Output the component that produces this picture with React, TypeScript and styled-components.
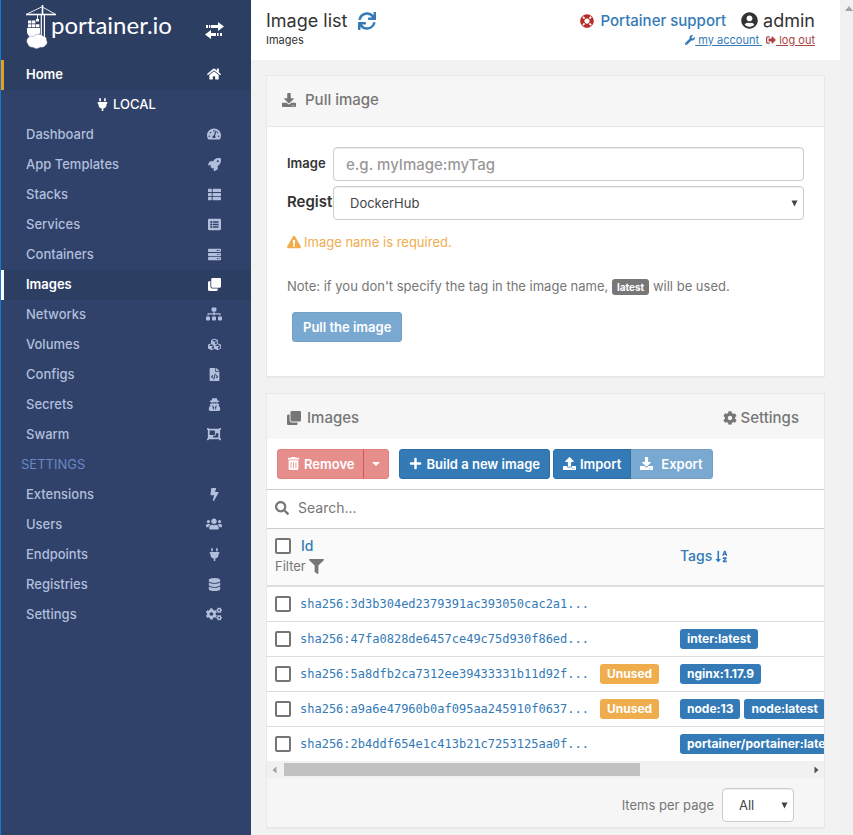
import React from "react";
import styled, { createGlobalStyle, css } from "styled-components";
import type { IconType } from "react-icons";
import {
  FaBolt,
  FaClone,
  FaCog,
  FaCogs,
  FaCubes,
  FaDatabase,
  FaDownload,
  FaExclamationTriangle,
  FaFileCode,
  FaFilter,
  FaHome,
  FaLifeRing,
  FaListAlt,
  FaObjectGroup,
  FaPlug,
  FaPlus,
  FaRocket,
  FaSearch,
  FaServer,
  FaSignOutAlt,
  FaSitemap,
  FaSortAlphaDown,
  FaSync,
  FaTachometerAlt,
  FaThList,
  FaTrashAlt,
  FaUpload,
  FaUserCircle,
  FaUserSecret,
  FaUsers,
  FaWrench,
} from "react-icons/fa";

const GlobalStyle = createGlobalStyle`
  *, *::before, *::after { box-sizing: border-box; }
  body {
    margin: 0;
    background: #f2f2f2;
    color: #333;
    font-family: Inter, "Open Sans", sans-serif;
    font-size: 14px;
    line-height: 20px;
  }
  button, input, select { font: inherit; margin: 0; }
  a { text-decoration: none; }
`;

const Page = styled.div`
  display: flex;
  min-height: 100vh;
  border-left: 1px solid #147bd1;
`;

/* ---------- Sidebar ---------- */

const Sidebar = styled.aside`
  flex: 0 0 250px;
  background: #30426a;
`;

const SidebarHeader = styled.div`
  display: flex;
  justify-content: space-between;
  height: 60px;
  padding: 5px 27px 0 24px;
  background: #2d3e63;
  color: #fff;
`;

const Brand = styled.a`
  display: flex;
  color: #fff;
`;

const BrandName = styled.span`
  margin-left: -6px;
  font-family: Lato, sans-serif;
  font-size: 24px;
  line-height: 40px;
`;

const ToggleButton = styled.button`
  align-self: flex-start;
  margin-top: 17px;
  padding: 0;
  border: 0;
  background: none;
  color: inherit;
  line-height: 0;
`;

const NavList = styled.ul`
  margin: 0;
  padding: 0;
  list-style: none;
`;

type NavTone = "home" | "current" | "plain";

const NavLink = styled.a<{ $tone: NavTone }>`
  display: flex;
  align-items: center;
  justify-content: space-between;
  height: 30px;
  padding: 0 27px 2px 22px;
  border-left: 3px solid
    ${({ $tone }) =>
      $tone === "home" ? "#e99d1a" : $tone === "current" ? "#fff" : "transparent"};
  background: ${({ $tone }) => ($tone === "plain" ? "transparent" : "#2d3e63")};
  color: ${({ $tone }) => ($tone === "plain" ? "#b2bfdc" : "#fff")};
  font-size: 13px;
  font-weight: ${({ $tone }) => ($tone === "plain" ? 500 : 600)};
`;

const NavIcon = styled.span`
  display: flex;
  justify-content: center;
  width: 20px;
`;

const EndpointName = styled.li`
  display: flex;
  align-items: center;
  justify-content: center;
  gap: 4px;
  height: 30px;
  padding-bottom: 2px;
  color: #fff;
  font-size: 13px;
  font-weight: 500;
`;

const NavTitle = styled.li`
  height: 30px;
  padding-left: 20px;
  color: #6b86c4;
  font-size: 13px;
  line-height: 28px;
`;

/* ---------- Main area ---------- */

const Main = styled.main`
  flex: 1;
  min-width: 0;
`;

const TopBar = styled.header`
  display: flex;
  justify-content: space-between;
  height: 60px;
  padding: 10px 25px 0 15px;
  background: #fff;
`;

const TitleRow = styled.div`
  display: flex;
  align-items: center;
  gap: 11px;
  height: 21px;
`;

const Title = styled.h1`
  margin: 0;
  font-size: 18px;
  font-weight: 400;
`;

const IconButton = styled.button`
  display: flex;
  padding: 0;
  border: 0;
  background: none;
  color: #337ab7;
  font-size: 18px;
`;

const Breadcrumb = styled.div`
  font-size: 11px;
  line-height: 18px;
`;

const UserArea = styled.div`
  display: flex;
  flex-direction: column;
  align-items: flex-end;
`;

const SupportLink = styled.a`
  display: flex;
  align-items: center;
  gap: 6px;
  margin-right: 4px;
  color: #337ab7;
  font-size: 15px;
  font-weight: 500;

  svg { color: #b92c28; }
`;

const UserName = styled.span`
  display: flex;
  align-items: center;
  gap: 5px;
  font-size: 18px;
`;

const UserLinks = styled.div`
  display: flex;
  gap: 4px;
  font-size: 11px;
  line-height: 18px;
`;

const UserLink = styled.a<{ $danger?: boolean }>`
  display: flex;
  align-items: center;
  color: ${({ $danger }) => ($danger ? "#a94442" : "#337ab7")};

  span { text-decoration: underline; white-space: pre; }
`;

const Content = styled.div`
  display: flex;
  flex-direction: column;
  gap: 15px;
  padding: 15px 15px 6px;
`;

const Panel = styled.section`
  border: 1px solid #e8e8e8;
  border-bottom-width: 2px;
  background: #fff;
`;

const PanelHead = styled.div<{ $compact?: boolean }>`
  display: flex;
  align-items: center;
  justify-content: space-between;
  background: #f6f6f6;
  color: #767676;
  ${({ $compact }) =>
    $compact
      ? css`
          height: 45px;
          padding: 2px 25px 0 20px;
        `
      : css`
          height: 51px;
          padding: 0 15px 2px;
          border-bottom: 1px solid #e8e8e8;
        `}
`;

const PanelTitle = styled.h2<{ $gap: number }>`
  display: flex;
  align-items: center;
  gap: ${({ $gap }) => $gap}px;
  margin: 0;
  font-size: 15px;
  font-weight: 500;
`;

const PlainButton = styled.button`
  display: flex;
  align-items: center;
  gap: 4px;
  padding: 0;
  border: 0;
  background: none;
  color: inherit;
  font-size: 15px;
  font-weight: 500;
`;

/* ---------- Pull form ---------- */

const PullForm = styled.form`
  padding: 20px 20px 34px;
`;

const FieldRow = styled.div`
  display: grid;
  grid-template-columns: 46px 1fr;
  margin-bottom: 5px;
`;

const FieldLabel = styled.label<{ $large?: boolean }>`
  overflow: hidden;
  font-size: ${({ $large }) => ($large ? 15 : 13)}px;
  font-weight: 600;
  line-height: 32px;
`;

const fieldBox = css`
  height: 34px;
  border: 1px solid #ccc;
  border-radius: 4px;
  background: #fff;
  box-shadow: inset 0 1px 1px rgba(0, 0, 0, 0.075);
  color: #444;
`;

const TextField = styled.input`
  ${fieldBox}
  width: 100%;
  padding: 0 12px;
  font-size: 15px;

  &::placeholder { color: #999; font-weight: 500; opacity: 1; }
`;

const SelectWrap = styled.div`
  position: relative;
  color: #444;
`;

const SelectField = styled.select`
  ${fieldBox}
  width: 100%;
  padding: 0 30px 0 16px;
  appearance: none;
  font-size: 13px;
`;

const SelectArrow = styled.svg`
  position: absolute;
  top: 14px;
  right: 6px;
  pointer-events: none;
`;

const Warning = styled.p`
  display: flex;
  align-items: center;
  gap: 3px;
  margin: 12px 0 24px;
  color: #f0ad4e;
  font-size: 13px;
`;

const Note = styled.p`
  margin: 0 0 15px;
  color: #767676;
  font-size: 13px;
`;

const Code = styled.span`
  padding: 2px 5px;
  border-radius: 3px;
  background: #777;
  color: #fff;
  font-size: 10px;
  font-weight: 700;
`;

/* ---------- Buttons ---------- */

const Button = styled.button<{ $kind?: "danger"; $side?: "left" | "right" }>`
  display: flex;
  align-items: center;
  gap: 4px;
  height: 30px;
  padding: 0 9px 1px;
  border: 1px solid ${({ $kind }) => ($kind ? "#d43f3a" : "#2e6da4")};
  border-radius: ${({ $side }) =>
    $side === "left" ? "3px 0 0 3px" : $side === "right" ? "0 3px 3px 0" : "3px"};
  background: ${({ $kind }) => ($kind ? "#d9534f" : "#337ab7")};
  color: #fff;
  font-size: 13px;
  font-weight: 600;
  white-space: nowrap;

  &:disabled { opacity: 0.65; }
  & + & { margin-left: ${({ $side }) => ($side === "right" ? "-1px" : "0")}; }
`;

const PullButton = styled(Button)`
  margin-left: 5px;
  padding: 0 10px 1px;
`;

const CaretButton = styled(Button)`
  padding: 0 8px;
`;

const ExportButton = styled(Button)`
  gap: 8px;
`;

const Toolbar = styled.div`
  display: flex;
  height: 50px;
  padding: 10px;
`;

const ButtonGroup = styled.div<{ $after: number }>`
  display: flex;
  margin-right: ${({ $after }) => $after}px;
`;

/* ---------- Table ---------- */

const SearchBar = styled.label`
  display: flex;
  align-items: center;
  gap: 9px;
  height: 40px;
  padding: 0 8px 2px;
  border: solid #ccc;
  border-width: 1px 0;
  color: #767676;
`;

const SearchInput = styled.input`
  flex: 1;
  padding: 0;
  border: 0;
  outline: 0;
  background: none;
  font-size: 14px;

  &::placeholder { color: #767676; opacity: 1; }
`;

const TableScroll = styled.div`
  overflow: hidden;
`;

const Table = styled.table`
  width: 816px;
  border-collapse: collapse;
  table-layout: fixed;
`;

const HeadCell = styled.th<{ $width?: number }>`
  width: ${({ $width }) => ($width ? `${$width}px` : "auto")};
  height: 57px;
  padding: 0 8px 2px;
  border-bottom: 2px solid #ddd;
  background: #fafafa;
  color: #767676;
  font-size: 13px;
  font-weight: 400;
  text-align: left;
`;

const SortLink = styled.a`
  display: inline-flex;
  align-items: center;
  gap: 3px;
  color: #337ab7;
  font-size: 14px;
  font-weight: 500;
`;

const CellLine = styled.div<{ $gap: number }>`
  display: flex;
  align-items: center;
  gap: ${({ $gap }) => $gap}px;
  height: 20px;
`;

const FilterButton = styled.button`
  display: flex;
  align-items: center;
  gap: 3px;
  height: 20px;
  padding: 0;
  border: 0;
  background: none;
  color: inherit;
`;

const Checkbox = styled.input`
  flex: none;
  width: 16px;
  height: 16px;
  border: 2px solid #757575;
  border-radius: 2px;
  background: #fff;
  appearance: none;
`;

const Row = styled.tr`
  & + & td { border-top: 1px solid #ddd; }
`;

const Cell = styled.td`
  height: 35px;
  padding: 0 8px;
  white-space: nowrap;
`;

const ImageId = styled.a`
  width: 291px;
  color: #337ab7;
  font-family: "DejaVu Sans Mono", monospace;
  font-size: 12px;
`;

const Badge = styled.span<{ $warn?: boolean }>`
  padding: 0 7px;
  border-radius: 3px;
  background: ${({ $warn }) => ($warn ? "#f0ad4e" : "#337ab7")};
  color: #fff;
  font-size: 12px;
  font-weight: 700;
`;

const ScrollBar = styled.div`
  display: flex;
  align-items: center;
  height: 17px;
  padding: 0 5px;
  background: #f1f1f1;
`;

const ScrollTrack = styled.div`
  flex: 1;
  margin: 0 7px;
`;

const ScrollThumb = styled.div`
  width: 68%;
  height: 13px;
  background: #c1c1c1;
`;

const PanelFoot = styled.div`
  display: flex;
  align-items: center;
  justify-content: flex-end;
  gap: 8px;
  height: 49px;
  padding: 5px 30px 0 0;
  background: #f6f6f6;
  color: #767676;
  font-size: 13px;
`;

const PageSelectWrap = styled(SelectWrap)`
  width: 72px;
`;

const PageScroll = styled.div`
  display: flex;
  flex: 0 0 13px;
  justify-content: flex-end;
  padding-top: 6px;
  background: #f1f1f1;
`;

/* ---------- Drawings ---------- */

const CraneLogo = () => (
  <svg width="32" height="45" viewBox="0 0 32 45" fill="#fff" aria-hidden="true">
    <g fill="none" stroke="#fff">
      <path d="M1 9.500H31" strokeWidth="1.600" />
      <path d="M2 9L17 1.800L30 9" strokeWidth="0.900" />
      <path d="M17.500 0V10" strokeWidth="1.600" />
      <path d="M16.300 9V36M19.400 9V36" strokeWidth="1.200" />
      <path d="M12.500 10V15" strokeWidth="0.900" />
    </g>
    <path d="M11 14h3v2.500h-3zM3 15.500h3.400v3H3zM7 15.500h3.400v3H7zM3 19.200h3.400v3H3zM7 19.200h3.400v3H7zM11 19.200h3.400v3H11z" />
    <path d="M2 23h13v5l-2.500 4h-8L2 28z" />
    <path
      d="M2.500 33.300Q5 30 8.500 31.300Q11 28.500 14.500 29.300Q17 29.300 18 31Q22 31.500 21.500 35Q23.500 38 20.500 40.500Q18.500 43 15.500 42.300Q11.500 45 8.500 42.500Q4 42.800 3 39.500Q0.500 36.500 2.500 33.300z"
      stroke="#2d3e63"
      strokeWidth="0.300"
    />
  </svg>
);

const TransferIcon = () => (
  <svg width="19" height="17" viewBox="0 0 19 17" fill="currentColor" aria-hidden="true">
    <path d="M13 0L19 4.500L13 9V6H6V3h7zM4 3h1.300v3H4zM1 3H3v3H1z" />
    <path d="M6 8L0 12.500L6 17V14h5v-3H6zM12 11h1.600v3H12zM15 11H17v3h-2z" />
  </svg>
);

const DownArrow = () => (
  <SelectArrow width="7" height="7" viewBox="0 0 7 7" aria-hidden="true">
    <path d="M0.500 0.500h6L3.500 6.500z" fill="#444" />
  </SelectArrow>
);

/* ---------- Data ---------- */

interface NavEntry {
  label: string;
  Icon: IconType;
  size?: number;
  tone?: NavTone;
}

const endpointNav: NavEntry[] = [
  { label: "Dashboard", Icon: FaTachometerAlt, size: 14 },
  { label: "App Templates", Icon: FaRocket },
  { label: "Stacks", Icon: FaThList },
  { label: "Services", Icon: FaListAlt },
  { label: "Containers", Icon: FaServer },
  { label: "Images", Icon: FaClone, tone: "current" },
  { label: "Networks", Icon: FaSitemap, size: 16 },
  { label: "Volumes", Icon: FaCubes },
  { label: "Configs", Icon: FaFileCode },
  { label: "Secrets", Icon: FaUserSecret },
  { label: "Swarm", Icon: FaObjectGroup, size: 14 },
];

const settingsNav: NavEntry[] = [
  { label: "Extensions", Icon: FaBolt },
  { label: "Users", Icon: FaUsers, size: 16 },
  { label: "Endpoints", Icon: FaPlug },
  { label: "Registries", Icon: FaDatabase },
  { label: "Settings", Icon: FaCogs, size: 16 },
];

const images = [
  { id: "sha256:3d3b304ed2379391ac393050cac2a1...", unused: false, tags: [] },
  { id: "sha256:47fa0828de6457ce49c75d930f86ed...", unused: false, tags: ["inter:latest"] },
  { id: "sha256:5a8dfb2ca7312ee39433331b11d92f...", unused: true, tags: ["nginx:1.17.9"] },
  { id: "sha256:a9a6e47960b0af095aa245910f0637...", unused: true, tags: ["node:13", "node:latest"] },
  { id: "sha256:2b4ddf654e1c413b21c7253125aa0f...", unused: false, tags: ["portainer/portainer:latest"] },
];

const NavItem = ({ label, Icon, size = 13, tone = "plain" }: NavEntry) => (
  <li>
    <NavLink href="#" $tone={tone}>
      {label}
      <NavIcon>
        <Icon size={size} />
      </NavIcon>
    </NavLink>
  </li>
);

export default function App() {
  return (
    <Page>
      <GlobalStyle />
      <Sidebar>
        <SidebarHeader>
          <Brand href="#">
            <CraneLogo />
            <BrandName>portainer.io</BrandName>
          </Brand>
          <ToggleButton type="button" aria-label="Toggle sidebar">
            <TransferIcon />
          </ToggleButton>
        </SidebarHeader>
        <nav>
          <NavList>
            <NavItem label="Home" Icon={FaHome} size={14} tone="home" />
            <EndpointName>
              <FaPlug size={13} />
              LOCAL
            </EndpointName>
            {endpointNav.map((entry) => (
              <NavItem key={entry.label} {...entry} />
            ))}
            <NavTitle>SETTINGS</NavTitle>
            {settingsNav.map((entry) => (
              <NavItem key={entry.label} {...entry} />
            ))}
          </NavList>
        </nav>
      </Sidebar>

      <Main>
        <TopBar>
          <div>
            <TitleRow>
              <Title>Image list</Title>
              <IconButton type="button" aria-label="Refresh">
                <FaSync />
              </IconButton>
            </TitleRow>
            <Breadcrumb>Images</Breadcrumb>
          </div>
          <UserArea>
            <TitleRow>
              <SupportLink href="#">
                <FaLifeRing size={14} />
                Portainer support
              </SupportLink>
              <UserName>
                <FaUserCircle size={17} />
                admin
              </UserName>
            </TitleRow>
            <UserLinks>
              <UserLink href="#">
                <FaWrench size={10} />
                <span> my account </span>
              </UserLink>
              <UserLink href="#" $danger>
                <FaSignOutAlt size={10} />
                <span> log out</span>
              </UserLink>
            </UserLinks>
          </UserArea>
        </TopBar>

        <Content>
          <Panel>
            <PanelHead>
              <PanelTitle $gap={9}>
                <FaDownload size={14} />
                Pull image
              </PanelTitle>
            </PanelHead>
            <PullForm>
              <FieldRow>
                <FieldLabel htmlFor="image">Image</FieldLabel>
                <TextField id="image" type="text" placeholder="e.g. myImage:myTag" />
              </FieldRow>
              <FieldRow>
                <FieldLabel htmlFor="registry" $large>
                  Registry
                </FieldLabel>
                <SelectWrap>
                  <SelectField id="registry">
                    <option>DockerHub</option>
                  </SelectField>
                  <DownArrow />
                </SelectWrap>
              </FieldRow>
              <Warning>
                <FaExclamationTriangle size={14} />
                Image name is required.
              </Warning>
              <Note>
                Note: if you don't specify the tag in the image name, <Code>latest</Code> will be
                used.
              </Note>
              <PullButton type="button" disabled>
                Pull the image
              </PullButton>
            </PullForm>
          </Panel>

          <Panel>
            <PanelHead $compact>
              <PanelTitle $gap={6}>
                <FaClone size={14} />
                Images
              </PanelTitle>
              <PlainButton type="button">
                <FaCog size={14} />
                Settings
              </PlainButton>
            </PanelHead>
            <Toolbar>
              <ButtonGroup $after={10}>
                <Button type="button" $kind="danger" $side="left" disabled>
                  <FaTrashAlt size={13} />
                  Remove
                </Button>
                <CaretButton
                  type="button"
                  $kind="danger"
                  $side="right"
                  disabled
                  aria-label="More remove options"
                >
                  <svg width="8" height="4" viewBox="0 0 8 4" aria-hidden="true">
                    <path d="M0 0h8L4 4z" fill="#fff" />
                  </svg>
                </CaretButton>
              </ButtonGroup>
              <ButtonGroup $after={3}>
                <Button type="button">
                  <FaPlus size={13} />
                  Build a new image
                </Button>
              </ButtonGroup>
              <ButtonGroup $after={0}>
                <Button type="button" $side="left">
                  <FaUpload size={13} />
                  Import
                </Button>
                <ExportButton type="button" $side="right" disabled>
                  <FaDownload size={13} />
                  Export
                </ExportButton>
              </ButtonGroup>
            </Toolbar>
            <SearchBar>
              <FaSearch />
              <SearchInput type="text" placeholder="Search..." aria-label="Search images" />
            </SearchBar>
            <TableScroll>
              <Table>
                <thead>
                  <tr>
                    <HeadCell $width={405}>
                      <CellLine $gap={10}>
                        <Checkbox type="checkbox" aria-label="Select all images" />
                        <SortLink href="#">Id</SortLink>
                      </CellLine>
                      <FilterButton type="button">
                        Filter
                        <FaFilter size={15} />
                      </FilterButton>
                    </HeadCell>
                    <HeadCell>
                      <SortLink href="#">
                        Tags
                        <FaSortAlphaDown size={13} />
                      </SortLink>
                    </HeadCell>
                  </tr>
                </thead>
                <tbody>
                  {images.map((image) => (
                    <Row key={image.id}>
                      <Cell>
                        <CellLine $gap={9}>
                          <Checkbox type="checkbox" aria-label={`Select ${image.id}`} />
                          <ImageId href="#">{image.id}</ImageId>
                          {image.unused && <Badge $warn>Unused</Badge>}
                        </CellLine>
                      </Cell>
                      <Cell>
                        <CellLine $gap={4}>
                          {image.tags.map((tag) => (
                            <Badge key={tag}>{tag}</Badge>
                          ))}
                        </CellLine>
                      </Cell>
                    </Row>
                  ))}
                </tbody>
              </Table>
            </TableScroll>
            <ScrollBar aria-hidden="true">
              <svg width="5" height="8" viewBox="0 0 5 8">
                <path d="M4.500 0.500v7L0.500 4z" fill="#a3a3a3" />
              </svg>
              <ScrollTrack>
                <ScrollThumb />
              </ScrollTrack>
              <svg width="5" height="8" viewBox="0 0 5 8">
                <path d="M0.500 0.500v7L4.500 4z" fill="#505050" />
              </svg>
            </ScrollBar>
            <PanelFoot>
              <label htmlFor="page-size">Items per page</label>
              <PageSelectWrap>
                <SelectField id="page-size">
                  <option>All</option>
                </SelectField>
                <DownArrow />
              </PageSelectWrap>
            </PanelFoot>
          </Panel>
        </Content>
      </Main>

      <PageScroll aria-hidden="true">
        <svg width="8" height="5" viewBox="0 0 8 5">
          <path d="M0 5h8L4 0z" fill="#a3a3a3" />
        </svg>
      </PageScroll>
    </Page>
  );
}
